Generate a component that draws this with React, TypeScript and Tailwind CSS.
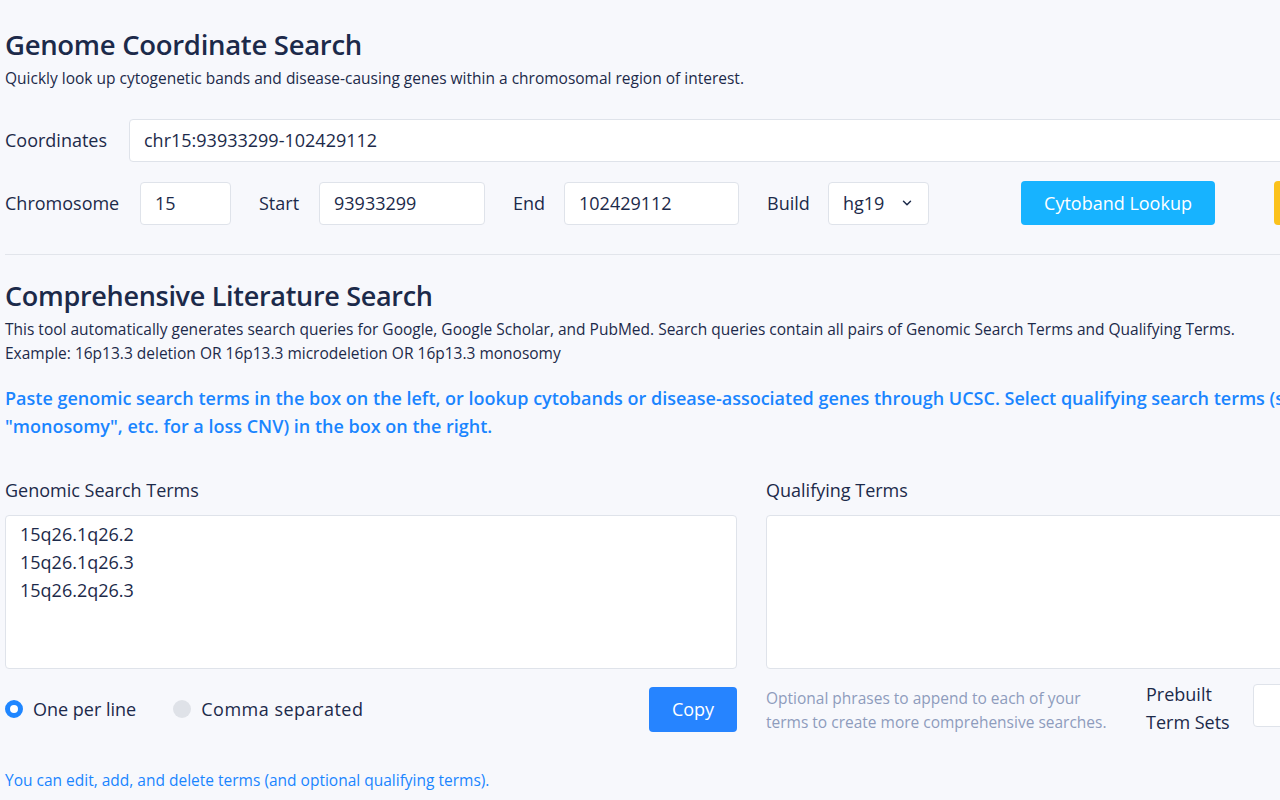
import React from "react";

const font = { fontFamily: "'Open Sans', 'Noto Sans', sans-serif" };

export default function App() {
  return (
    <div className="w-[1280px] h-[800px] overflow-hidden bg-[#f7f8fc] text-[#1c2a4a]" style={font}>
      <div className="w-[1500px] pl-[5px] pt-[27px]">
        <h1 className="text-[27.5px] font-semibold leading-[36px] tracking-[-0.3px]">Genome Coordinate Search</h1>
        <p className="text-[15.5px] leading-[20px] mt-[5px]">Quickly look up cytogenetic bands and disease-causing genes within a chromosomal region of interest.</p>

        <div className="flex items-center mt-[31px] h-[43px]">
          <label className="text-[18px] w-[124px]">Coordinates</label>
          <div className="flex-1 h-[43px] bg-white border border-[#dfe3ea] rounded-[4px] flex items-center px-[14px] text-[18px]">chr15:93933299-102429112</div>
        </div>

        <div className="flex items-center mt-[19px] h-[44px]">
          <label className="text-[18px] w-[135px]">Chromosome</label>
          <div className="w-[91px] h-[43px] bg-white border border-[#dfe3ea] rounded-[4px] flex items-center px-[14px] text-[18px]">15</div>
          <label className="text-[18px] ml-[28px] w-[60px]">Start</label>
          <div className="w-[166px] h-[43px] bg-white border border-[#dfe3ea] rounded-[4px] flex items-center px-[14px] text-[18px]">93933299</div>
          <label className="text-[18px] ml-[28px] w-[51px]">End</label>
          <div className="w-[175px] h-[43px] bg-white border border-[#dfe3ea] rounded-[4px] flex items-center px-[14px] text-[18px]">102429112</div>
          <label className="text-[18px] ml-[28px] w-[61px]">Build</label>
          <div className="w-[101px] h-[43px] bg-white border border-[#dfe3ea] rounded-[4px] flex items-center justify-between pl-[14px] pr-[14px] text-[18px]">
            <span>hg19</span>
            <svg width="14" height="14" viewBox="0 0 24 24" fill="none" stroke="#1c2a4a" strokeWidth="2.5" strokeLinecap="round" strokeLinejoin="round"><path d="M6 9l6 6 6-6" /></svg>
          </div>
          <button className="ml-[92px] w-[194px] h-[44px] bg-[#17b3ff] text-white rounded-[4px] text-[18px]">Cytoband Lookup</button>
          <button className="ml-[59px] w-[150px] h-[44px] bg-[#fbc21c] text-white rounded-[4px] text-[18px]">&nbsp;</button>
        </div>

        <div className="mt-[29px] h-px bg-[#e2e5eb]" />

        <h2 className="mt-[23px] text-[27px] font-semibold leading-[36px] tracking-[-0.3px]">Comprehensive Literature Search</h2>
        <p className="text-[15.5px] leading-[24px] mt-[3px]">This tool automatically generates search queries for Google, Google Scholar, and PubMed. Search queries contain all pairs of Genomic Search Terms and Qualifying Terms.<br />Example: 16p13.3 deletion OR 16p13.3 microdeletion OR 16p13.3 monosomy</p>
        <div className="text-[18px] leading-[28px] mt-[19px] font-semibold text-[#1a85ff]">
          <p className="whitespace-nowrap">Paste genomic search terms in the box on the left, or lookup cytobands or disease-associated genes through UCSC. Select qualifying search terms (such as "deletion", "microdeletion",</p>
          <p className="whitespace-nowrap">"monosomy", etc. for a loss CNV) in the box on the right.</p>
        </div>

        <div className="flex gap-[29px] mt-[38px]">
          <div className="w-[732px]">
            <div className="text-[18px] leading-[24px]">Genomic Search Terms</div>
            <div className="mt-[13px] h-[154px] bg-white border border-[#dfe3ea] rounded-[4px] px-[14px] pt-[4px] text-[18px] leading-[28px]">
              <div>15q26.1q26.2</div>
              <div>15q26.1q26.3</div>
              <div>15q26.2q26.3</div>
            </div>
            <div className="flex items-center mt-[17px] h-[46px]">
              <span className="w-[18px] h-[18px] rounded-full border-[5px] border-[#1f86ff] bg-white" />
              <span className="ml-[10px] text-[18px]">One per line</span>
              <span className="ml-[37px] w-[18px] h-[18px] rounded-full bg-[#dfe2e8]" />
              <span className="ml-[10px] text-[18px] tracking-[0.5px]">Comma separated</span>
              <button className="ml-auto w-[88px] h-[45px] bg-[#2684ff] text-white rounded-[4px] text-[18px]">Copy</button>
            </div>
          </div>
          <div className="w-[732px]">
            <div className="text-[18px] leading-[24px]">Qualifying Terms</div>
            <div className="mt-[13px] h-[154px] bg-white border border-[#dfe3ea] rounded-[4px]" />
            <div className="flex mt-[11px]">
              <p className="w-[365px] pr-[12px] text-[15.5px] leading-[24px] text-[#8e9cbd] mt-[6px]">Optional phrases to append to each of your terms to create more comprehensive searches.</p>
              <div className="ml-[15px] text-[18px] leading-[28px] w-[107px]">Prebuilt<br />Term Sets</div>
              <div className="w-[200px] h-[43px] mt-[4px] bg-white border border-[#dfe3ea] rounded-[4px]" />
            </div>
          </div>
        </div>

        <p className="mt-[34px] text-[15.5px] leading-[20px] text-[#1a85ff]">You can edit, add, and delete terms (and optional qualifying terms).</p>
      </div>
    </div>
  );
}
